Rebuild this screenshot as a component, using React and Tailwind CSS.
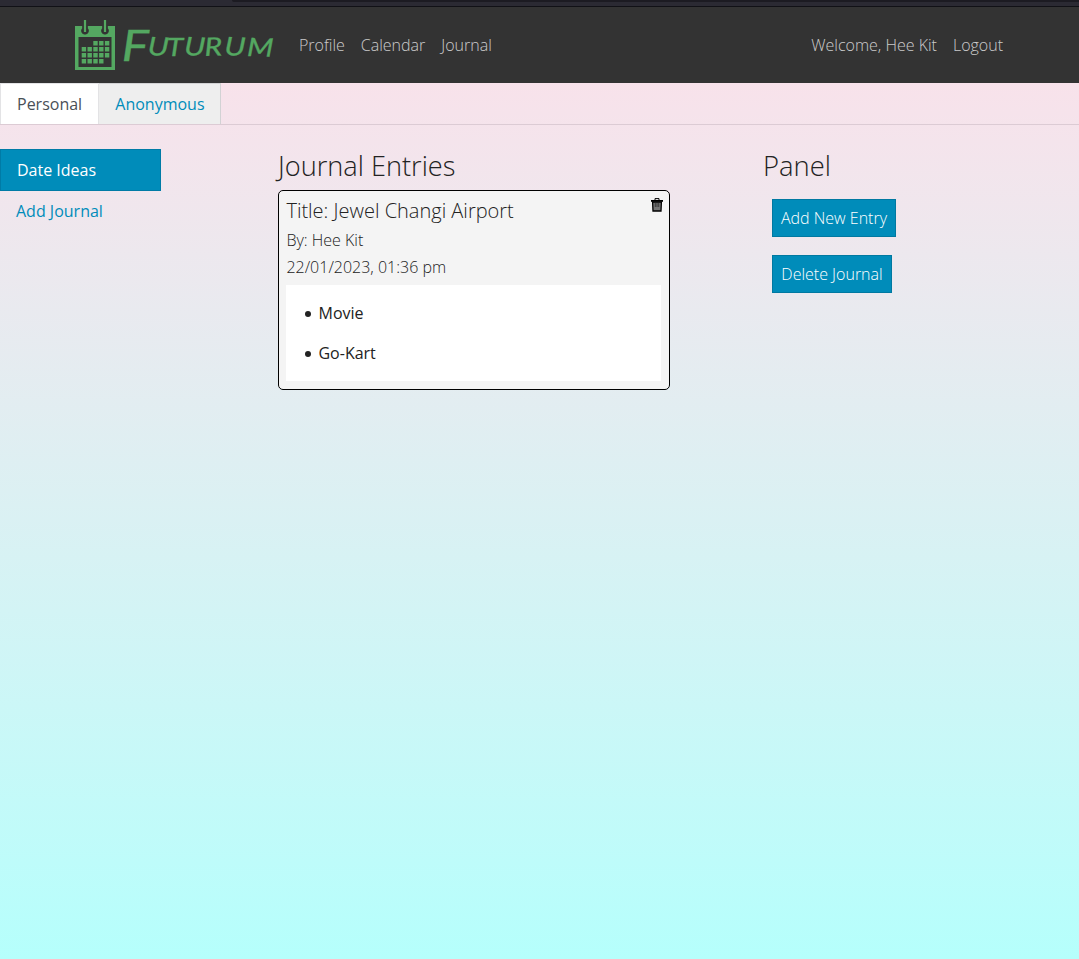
const navLink = "px-2 py-2 font-light text-white/75";
const button =
  "h-[38px] border border-[#0079a1] bg-[#008cba] text-center font-light leading-6 text-white whitespace-nowrap";

function CalendarIcon() {
  const dots = [
    [2, 3, 4],
    [0, 1, 2, 3, 4],
    [0, 1, 2, 3, 4],
    [0, 1, 2, 3],
  ];
  return (
    <svg width="42" height="52" viewBox="0 0 42 52" className="shrink-0">
      <rect x="1" y="7" width="40" height="44" fill="#54a861" />
      <rect x="4.500" y="18" width="33" height="30" fill="#333" />
      {[11, 31].map((x) => (
        <g key={x}>
          <path d={`M${x - 2.2} 7V9.500a3.200 3.200 0 1 0 4.400 0V7`} fill="#333" stroke="#333" strokeWidth="1.200" />
          <path d={`M${x} 1V13`} stroke="#54a861" strokeWidth="2.2" />
        </g>
      ))}
      {dots.map((row, r) =>
        row.map((c) => (
          <rect key={`${r}-${c}`} x={7.700 + c * 5.800} y={22 + r * 6} width="4.400" height="4.500" fill="#54a861" />
        ))
      )}
    </svg>
  );
}

function Wordmark() {
  return (
    <svg width="156" height="52" viewBox="0 0 156 52" className="overflow-visible">
      <text
        transform="scale(1.2 1)"
        x="4.500 26 42 56.500 74 90 109"
        y="42 36 37 36 37 36 37"
        rotate="0 3 0 3 -2 3 2"
        fill="#54a861"
        stroke="#54a861"
        strokeWidth=".3"
        fontFamily="Lato, 'Open Sans', sans-serif"
        fontStyle="italic"
        fontSize="25.5"
      >
        <tspan fontSize="43">F</tspan>UTURUM
      </text>
    </svg>
  );
}

function TrashIcon() {
  return (
    <svg width="12" height="14" viewBox="0 0 12 14">
      <path d="M4 2V.6h4V2" fill="none" stroke="#000" />
      <path d="M0 2h12v1.800H0z" />
      <path d="M1.600 4h8.800L10 13H2z" fill="#777" stroke="#000" strokeWidth="1.300" />
      <path d="M4.300 4v5M6 4v5M7.700 4v5" stroke="#222" strokeWidth=".7" />
    </svg>
  );
}

export default function App() {
  return (
    <div className="flex h-[959px] w-full flex-col overflow-hidden bg-linear-to-b from-[#fddfe9] to-[#b5fffc] font-['Open_Sans',sans-serif] text-base leading-6 text-[#222]">
      <div className="flex h-[7px] shrink-0 justify-end border-b border-[#111116] bg-[#2b2a33]">
        <div className="h-[2px] w-[847px] rounded-bl-sm bg-[#1c1b22]" />
      </div>
      <header className="flex h-[76px] shrink-0 items-center bg-[#333] pr-[68px] pl-[74px]">
        <CalendarIcon />
        <Wordmark />
        <nav className="ml-[19px] flex flex-1">
          <a className={navLink}>Profile</a>
          <a className={navLink}>Calendar</a>
          <a className={navLink}>Journal</a>
        </nav>
        <div className="flex">
          <span className={navLink}>Welcome, Hee Kit</span>
          <a className={navLink}>Logout</a>
        </div>
      </header>
      <div className="flex h-[42px] shrink-0 border-b border-[#dccbd4]">
        <div className="h-[41px] w-[99px] border border-b-0 border-[#e3e3e5] bg-white pt-2 pl-4 text-[#495057]">Personal</div>
        <div className="h-[41px] w-[122px] border border-b-0 border-l-0 border-[#d2d2d4] bg-[#eee] pt-2 pl-[16.300px] text-[#008cba]">Anonymous</div>
      </div>
      <main className="flex pt-6">
        <aside className="w-[161px]">
          <div className="h-[42px] border border-[#007ba6] bg-[#008cba] px-4 py-2 font-medium text-white">Date Ideas</div>
          <div className="px-4 py-2 text-[#008cba]">Add Journal</div>
        </aside>
        <section className="ml-[117px] w-[392px]">
          <h2 className="h-[41px] text-[27.200px] leading-[33px] font-light">Journal Entries</h2>
          <article className="h-[200px] rounded-[5px] border border-black bg-[#f4f4f4] px-[7.400px] pt-[7px]">
            <div className="flex justify-between">
              <h3 className="text-xl leading-[26px] font-light">Title: Jewel Changi Airport</h3>
              <button className="-mr-px h-[14px]"><TrashIcon /></button>
            </div>
            <p className="mt-[3px] h-[27px] font-light leading-[26px]">By: Hee Kit</p>
            <p className="h-[31px] font-light leading-[26px]">22/01/2023, 01:36 pm</p>
            <ul className="mr-[.6px] flex h-24 flex-col gap-4 bg-white pt-4 pl-[18.600px]">
              {["Movie", "Go-Kart"].map((item) => (
                <li key={item} className="flex items-center gap-[7.500px]">
                  <span className="mt-px size-[6px] rounded-full bg-[#222]" />
                  {item}
                </li>
              ))}
            </ul>
          </article>
        </section>
        <section className="ml-[93px]">
          <h2 className="h-[50px] text-[27.400px] leading-[33px] font-light">Panel</h2>
          <div className="ml-[9px] flex flex-col items-start gap-[18px]">
            <button className={`${button} w-[124px]`}>Add New Entry</button>
            <button className={`${button} w-[120px]`}>Delete Journal</button>
          </div>
        </section>
      </main>
    </div>
  );
}
